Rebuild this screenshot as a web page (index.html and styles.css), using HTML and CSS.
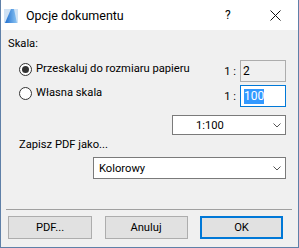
FILE: index.html
```html
<!DOCTYPE html>
<html lang="pl">
<head>
<meta charset="utf-8">
<title>Opcje dokumentu</title>
<link rel="stylesheet" href="styles.css">
</head>
<body>
<div class="window">
  <div class="titlebar">
    <svg class="app-icon" width="14" height="14" viewBox="0 0 14 14">
      <defs>
        <linearGradient id="wedge" x1="0" y1="0" x2="1" y2="0">
          <stop offset="0" stop-color="#1f6fd0"/>
          <stop offset="1" stop-color="#8cc4f2"/>
        </linearGradient>
      </defs>
      <rect x="0" y="0" width="14" height="14" fill="#cfe2f5"/>
      <polygon points="1,14 7,0 10,0 13,14" fill="url(#wedge)"/>
    </svg>
    <span class="title">Opcje dokumentu</span>
    <span class="help">?</span>
    <svg class="close" width="11" height="11" viewBox="0 0 11 11">
      <path d="M0.5 0.5 L10.5 10.5 M10.5 0.5 L0.5 10.5" stroke="#111" stroke-width="1" fill="none"/>
    </svg>
  </div>
  <div class="content">
    <div class="group-label">Skala:</div>
    <div class="scale-row first">
      <label class="radio"><span class="circle checked"></span>Przeskaluj do rozmiaru papieru</label>
      <span class="ratio">1 :</span>
      <span class="field readonly">2</span>
    </div>
    <div class="scale-row second">
      <label class="radio"><span class="circle"></span>Własna skala</label>
      <span class="ratio">1 :</span>
      <span class="field active"><span class="selection">100</span></span>
    </div>
    <div class="combo-row">
      <div class="combo scale-combo">
        <span class="combo-text">1:100</span>
        <svg class="chevron" width="8" height="5" viewBox="0 0 8 5"><polyline points="0.5,0.5 4,4 7.5,0.5" fill="none" stroke="#555" stroke-width="1"/></svg>
      </div>
    </div>
    <div class="group-label save-label">Zapisz PDF jako...</div>
    <div class="combo-row">
      <div class="combo color-combo">
        <span class="combo-text">Kolorowy</span>
        <svg class="chevron" width="8" height="5" viewBox="0 0 8 5"><polyline points="0.5,0.5 4,4 7.5,0.5" fill="none" stroke="#555" stroke-width="1"/></svg>
      </div>
    </div>
    <div class="separator"></div>
    <div class="buttons">
      <button class="btn pdf">PDF...</button>
      <button class="btn cancel">Anuluj</button>
      <button class="btn ok">OK</button>
    </div>
  </div>
</div>
</body>
</html>
```

FILE: styles.css
```css
html, body {
  margin: 0;
  padding: 0;
  background: #f0f0f0;
}

.window {
  width: 299px;
  height: 248px;
  box-sizing: border-box;
  border: 1px solid #5f80a8;
  border-top: none;
  display: flex;
  flex-direction: column;
  font-family: Roboto, "Noto Sans", sans-serif;
  font-size: 11.2px;
  color: #000;
  background: #f0f0f0;
}

.titlebar {
  height: 30px;
  flex: none;
  background: #fff;
  display: flex;
  align-items: center;
}

.app-icon {
  margin-left: 3px;
  margin-top: 1px;
}

.title {
  margin-left: 8px;
  font-size: 12.5px;
  flex: 1;
}

.help {
  font-size: 12px;
  width: 12px;
  margin-right: 33px;
}

.close {
  margin-right: 17px;
}

.content {
  flex: 1;
  display: flex;
  flex-direction: column;
  padding: 0 12px 0 7px;
}

.group-label {
  line-height: 16px;
  margin-top: 6px;
}

.save-label {
  margin-top: 2px;
  margin-left: 11px;
}

.scale-row {
  display: flex;
  align-items: center;
  height: 22px;
}

.scale-row.first {
  margin-top: 8px;
}

.scale-row.second {
  margin-top: 3px;
}

.radio {
  flex: 1;
  align-self: flex-start;
  display: flex;
  align-items: center;
  line-height: 16px;
  margin-top: 1px;
  margin-left: 11px;
}

.scale-row.second .radio {
  margin-top: 0;
}

.circle {
  width: 13px;
  height: 13px;
  box-sizing: border-box;
  border: 1px solid #333;
  border-radius: 50%;
  background: #fff;
  margin-right: 4px;
  display: flex;
  align-items: center;
  justify-content: center;
}

.circle.checked::after {
  content: "";
  width: 7px;
  height: 7px;
  border-radius: 50%;
  background: #333;
}

.ratio {
  margin-right: 4px;
}

.field {
  width: 46px;
  height: 22px;
  box-sizing: border-box;
  display: flex;
  align-items: center;
  padding-left: 2px;
  font-size: 12px;
}

.field.readonly {
  border: 1px solid #adadad;
  background: #f0f0f0;
}

.field.active {
  border: 1px solid #0078d7;
  background: #fff;
  padding-left: 3px;
}

.selection {
  background: #3399ff;
  color: #fff;
  line-height: 15px;
}

.combo-row {
  display: flex;
  justify-content: flex-end;
}

.combo {
  box-sizing: border-box;
  border: 1px solid #7a7a7a;
  background: #fff;
  display: flex;
  align-items: center;
}

.scale-combo {
  width: 114px;
  height: 20px;
  margin-top: 8px;
  padding-left: 23px;
}

.color-combo {
  width: 193px;
  height: 22px;
  margin-top: 4px;
  padding-left: 5px;
}

.combo-text {
  flex: 1;
}

.chevron {
  margin-right: 4px;
}

.separator {
  height: 1px;
  background: #a0a0a0;
  margin: 30px -6px 0 -2px;
}

.buttons {
  display: flex;
  justify-content: space-between;
  margin-top: 6px;
  padding-right: 3px;
}

.btn {
  font: inherit;
  color: #000;
  height: 23px;
  box-sizing: border-box;
  background: #e1e1e1;
  border: 1px solid #adadad;
  padding: 0;
  width: 83px;
}

.btn.pdf {
  width: 84px;
}

.btn.ok {
  border: 2px solid #0078d7;
}
```
